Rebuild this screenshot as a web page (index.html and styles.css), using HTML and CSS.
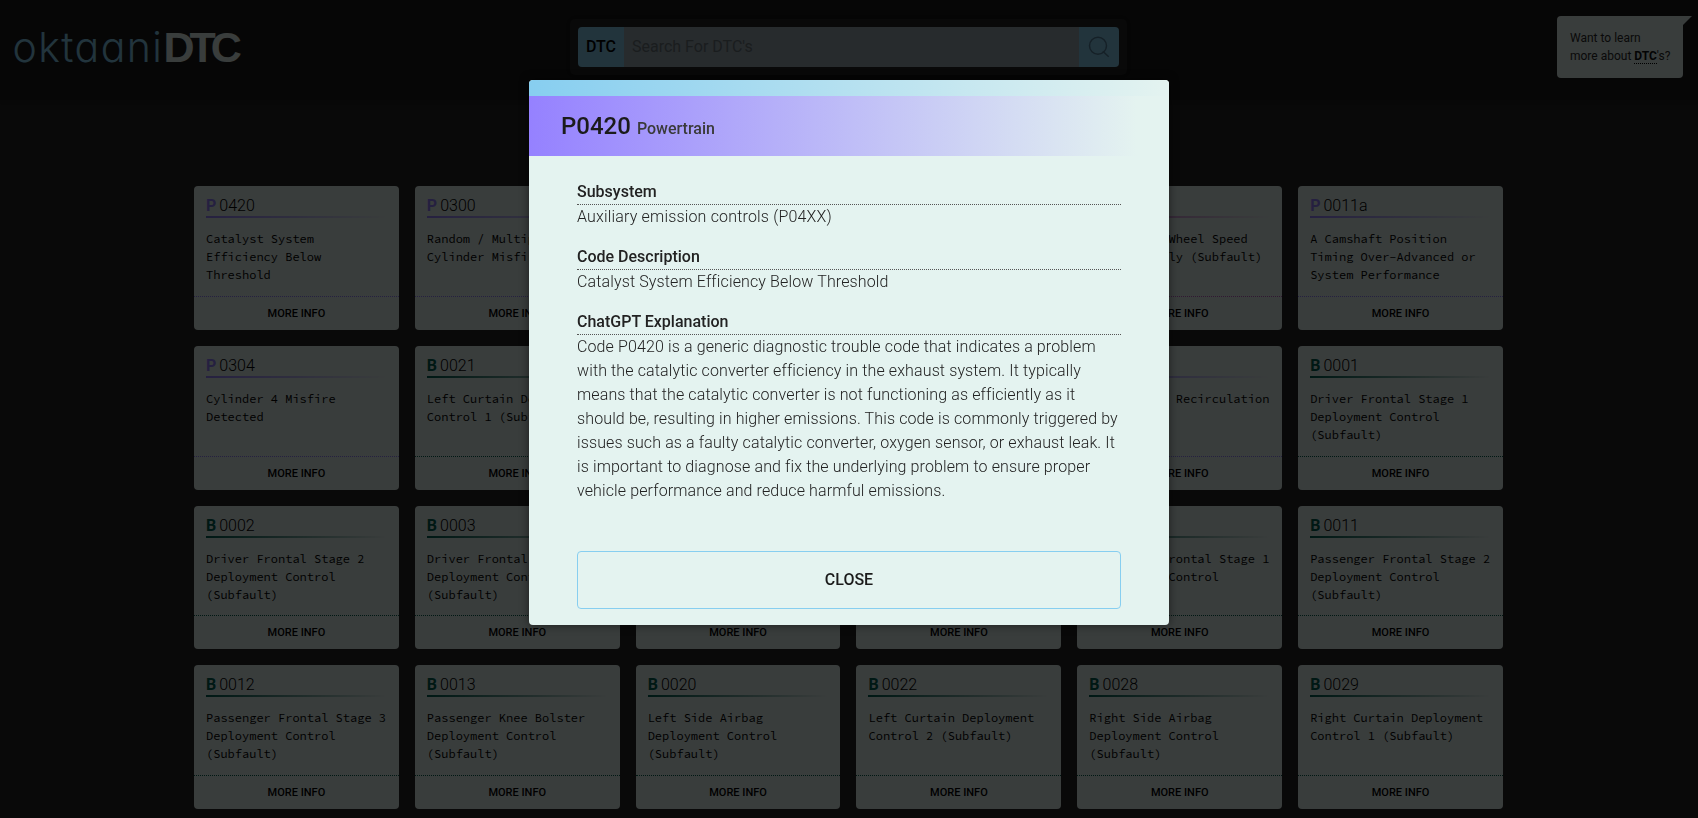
FILE: index.html
```html
<!DOCTYPE html>
<html lang="en">
<head>
<meta charset="utf-8">
<title>oktaani DTC</title>
<link rel="stylesheet" href="styles.css">
</head>
<body>
<header class="header">
  <div class="logo"><span class="logo-name">oktaani</span><span class="logo-dtc">DTC</span></div>
  <form class="search">
    <div class="search-box">
      <span class="search-tag">DTC</span>
      <span class="search-input">Search For DTC's</span>
      <span class="search-btn"><svg width="22" height="22" viewBox="0 0 22 22" fill="none" stroke="currentColor" stroke-width="1.5"><circle cx="10" cy="9.7" r="8.5"/><path d="M14.8 15.2 20.7 20.8"/></svg></span>
    </div>
  </form>
  <div class="tip">Want to learn<br>more about <b>DTC</b>'s?</div>
</header>
<main class="grid" id="grid"></main>
<div class="overlay"></div>
<div class="modal">
  <div class="modal-bar"></div>
  <div class="modal-head"><span class="modal-code">P0420</span><span class="modal-system">Powertrain</span></div>
  <div class="modal-body">
    <h3>Subsystem</h3>
    <p class="subsystem">Auxiliary emission controls (P04XX)</p>
    <h3>Code Description</h3>
    <p class="description">Catalyst System Efficiency Below Threshold</p>
    <h3>ChatGPT Explanation</h3>
    <p class="explanation">Code P0420 is a generic diagnostic trouble code that indicates a problem<br>with the catalytic converter efficiency in the exhaust system. It typically<br>means that the catalytic converter is not functioning as efficiently as it<br>should be, resulting in higher emissions. This code is commonly triggered by<br>issues such as a faulty catalytic converter, oxygen sensor, or exhaust leak. It<br>is important to diagnose and fix the underlying problem to ensure proper<br>vehicle performance and reduce harmful emissions.</p>
    <button class="close">CLOSE</button>
  </div>
</div>
<script src="app.js"></script>
</body>
</html>
```
FILE: styles.css
```css
* { box-sizing: border-box; }
body { margin: 0; height: 818px; overflow: hidden; background: #252525; font-family: Roboto, sans-serif; color: #000; }
.header { height: 100px; background: #191919; box-shadow: 0 2px 6px rgba(0,0,0,.2); display: grid; grid-template-columns: 570px 557px 1fr; align-items: start; }
.logo { display: flex; align-items: baseline; padding: 21px 0 0 12.5px; line-height: 52px; white-space: nowrap; }
.logo-name { width: 151px; font-family: Inter, sans-serif; font-weight: 300; font-size: 41px; letter-spacing: 1.4px; font-feature-settings: "cv11"; color: #87cef0; }
.logo-dtc { font-family: "Liberation Sans", sans-serif; font-weight: 700; font-size: 43px; letter-spacing: -5px; color: #e4f2ef; }
.search { margin: 19px 0 0; height: 56px; padding: 8px; border-radius: 5px; background: #252525; box-shadow: 0 0 6px rgba(0,0,0,.4); }
.search-box { display: flex; height: 40px; border-radius: 4px; overflow: hidden; font-size: 16px; line-height: 40px; }
.search-tag { width: 46px; background: #87cef0; text-align: center; font-weight: 500; }
.search-input { flex: 1; padding-left: 8px; background: #9cabb2; color: #68747a; }
.search-btn { width: 40px; background: #87cef0; color: #55819a; display: flex; align-items: center; justify-content: center; }
.tip { position: relative; justify-self: end; margin: 16px 15px 0 0; width: 126px; height: 62px; padding: 13px 0 0 13px; border-radius: 4px 0 4px 4px; background: #e4f2ef; color: #2b2b2b; font-size: 12px; line-height: 18px; }
.tip::after { content: ""; position: absolute; left: 100%; top: 0; border-top: 9px solid #e4f2ef; border-right: 9px solid transparent; }
.tip b { font-weight: 700; border-bottom: 1px dotted #000; color: #111; }
.grid { margin: 86px 0 0 194px; width: 1309px; display: grid; grid-template-columns: repeat(6, 1fr); grid-auto-rows: 143.75px; gap: 16px; }
.card { display: flex; flex-direction: column; border-radius: 4px; background: #e4f2ef; overflow: hidden; }
.card-p { --tone: #9581ff; }
.card-b { --tone: #006052; }
.card-c { --tone: #c05fc8; }
.card-code { margin: 8px 12px 0; height: 24px; font-size: 16px; line-height: 23px; font-weight: 300; background: linear-gradient(90deg, var(--tone), transparent) bottom / 100% 2px no-repeat; }
.card-code b { margin-right: 3px; font-weight: 700; color: var(--tone); }
.card-text { flex: 1; margin: 12px 0 0 12px; font-family: "Source Code Pro", "Noto Sans Mono CJK JP", monospace; font-size: 12px; line-height: 18px; white-space: pre; }
.card-more { height: 34px; border-top: 1px dotted var(--tone); text-align: center; font-size: 11px; font-weight: 500; line-height: 33px; }
.overlay { position: fixed; inset: 0; background: rgba(0,0,0,.75); }
.modal { position: absolute; left: 529px; top: 80px; width: 640px; height: 545px; border-radius: 4px; overflow: hidden; background: #e4f3f0; color: #222; box-shadow: 0 0 10px rgba(0,0,0,.5); }
.modal-bar { height: 16px; background: linear-gradient(90deg, #87cef0, #e4f3f0); }
.modal-head { height: 60px; padding-left: 32px; line-height: 60px; background: linear-gradient(90deg, #9581ff, #e4f3f0 95%); font-weight: 500; }
.modal-code { margin-right: 6px; font-size: 24px; color: #1b1b1b; }
.modal-system { font-size: 16px; color: #3a3a3a; }
.modal-body { padding: 24px 48px 0; }
.modal-body h3 { margin: 0; height: 25px; border-bottom: 1px dotted #555; font-size: 16px; line-height: 24px; font-weight: 500; }
.modal-body p { margin: 0 0 16px; font-size: 16px; line-height: 24px; font-weight: 300; white-space: nowrap; }
.subsystem { letter-spacing: .17px; }
.description { letter-spacing: .13px; }
.explanation { letter-spacing: .12px; }
.close { display: block; width: 100%; height: 58px; margin-top: 48px; padding: 0 0 2px; border: 1px solid #87cef0; border-radius: 4px; background: none; font: 500 16px Roboto, sans-serif; color: #1b1b1b; }
```
FILE: app.js
```js
const codes = [
  ["P", "0420", "Catalyst System\nEfficiency Below\nThreshold"],
  ["P", "0300", "Random / Multiple\nCylinder Misfire"],
  ["P", "0171", ""],
  ["P", "0442", ""],
  ["C", "0040", "Left Front Wheel Speed\nSensor Supply (Subfault)"],
  ["P", "0011a", "A Camshaft Position\nTiming Over-Advanced or\nSystem Performance"],
  ["P", "0304", "Cylinder 4 Misfire\nDetected"],
  ["B", "0021", "Left Curtain Deployment\nControl 1 (Subfault)"],
  ["P", "0455", ""],
  ["P", "0128", ""],
  ["P", "0401", "Exhaust Gas Recirculation"],
  ["B", "0001", "Driver Frontal Stage 1\nDeployment Control\n(Subfault)"],
  ["B", "0002", "Driver Frontal Stage 2\nDeployment Control\n(Subfault)"],
  ["B", "0003", "Driver Frontal Stage 3\nDeployment Control\n(Subfault)"],
  ["B", "0004", ""],
  ["B", "0005", ""],
  ["B", "0010", "Passenger Frontal Stage 1\nDeployment Control\n(Subfault)"],
  ["B", "0011", "Passenger Frontal Stage 2\nDeployment Control\n(Subfault)"],
  ["B", "0012", "Passenger Frontal Stage 3\nDeployment Control\n(Subfault)"],
  ["B", "0013", "Passenger Knee Bolster\nDeployment Control\n(Subfault)"],
  ["B", "0020", "Left Side Airbag\nDeployment Control\n(Subfault)"],
  ["B", "0022", "Left Curtain Deployment\nControl 2 (Subfault)"],
  ["B", "0028", "Right Side Airbag\nDeployment Control\n(Subfault)"],
  ["B", "0029", "Right Curtain Deployment\nControl 1 (Subfault)"]
];
document.getElementById("grid").innerHTML = codes.map(([letter, number, text]) =>
  `<article class="card card-${letter.toLowerCase()}"><div class="card-code"><b>${letter}</b>${number}</div><div class="card-text">${text}</div><div class="card-more">MORE INFO</div></article>`
).join("");
```
